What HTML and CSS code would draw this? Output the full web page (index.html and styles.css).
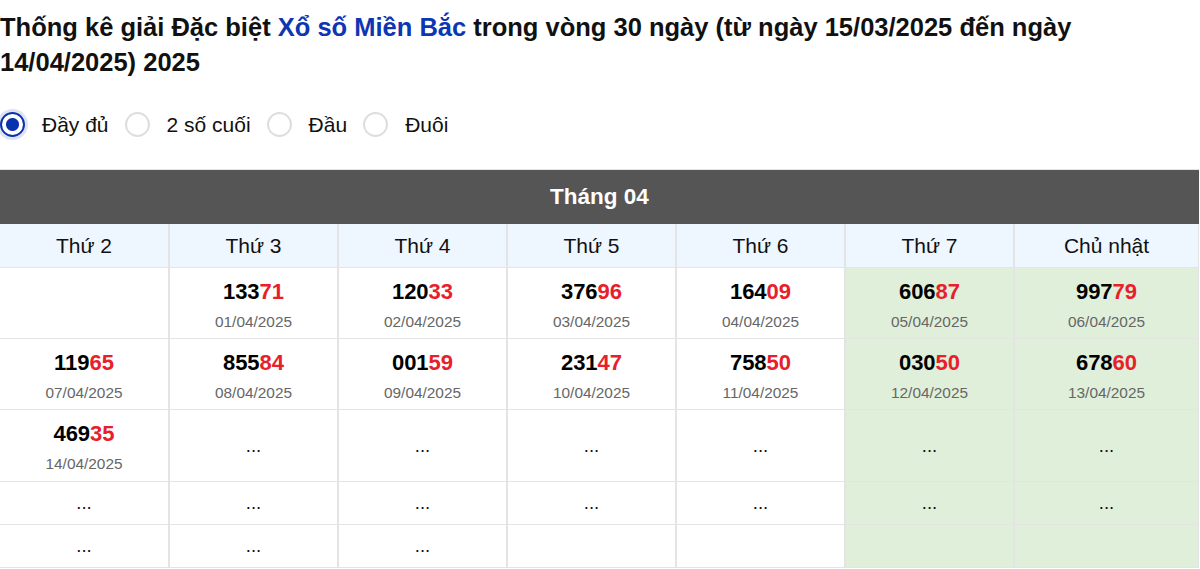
FILE: index.html
```html
<!DOCTYPE html>
<html lang="vi">
<head>
<meta charset="utf-8">
<title>Thống kê giải Đặc biệt</title>
<link rel="stylesheet" href="styles.css">
</head>
<body>
<h1 class="title">Thống kê giải Đặc biệt <span class="hl">Xổ số Miền Bắc</span> trong vòng 30 ngày (từ ngày 15/03/2025 đến ngày 14/04/2025) 2025</h1>
<div class="options">
  <label class="opt"><span class="radio on"></span><span class="lbl">Đầy đủ</span></label>
  <label class="opt"><span class="radio"></span><span class="lbl">2 số cuối</span></label>
  <label class="opt"><span class="radio"></span><span class="lbl">Đầu</span></label>
  <label class="opt"><span class="radio"></span><span class="lbl">Đuôi</span></label>
</div>
<table class="cal">
  <colgroup>
    <col class="c1"><col class="c"><col class="c"><col class="c"><col class="c"><col class="c"><col>
  </colgroup>
  <thead>
    <tr><th class="month" colspan="7">Tháng 04</th></tr>
    <tr class="days"><th>Thứ 2</th><th>Thứ 3</th><th>Thứ 4</th><th>Thứ 5</th><th>Thứ 6</th><th>Thứ 7</th><th>Chủ nhật</th></tr>
  </thead>
  <tbody>
    <tr class="data">
      <td></td>
      <td><div class="num">133<span class="r">71</span></div><div class="date">01/04/2025</div></td>
      <td><div class="num">120<span class="r">33</span></div><div class="date">02/04/2025</div></td>
      <td><div class="num">376<span class="r">96</span></div><div class="date">03/04/2025</div></td>
      <td><div class="num">164<span class="r">09</span></div><div class="date">04/04/2025</div></td>
      <td class="we"><div class="num">606<span class="r">87</span></div><div class="date">05/04/2025</div></td>
      <td class="we"><div class="num">997<span class="r">79</span></div><div class="date">06/04/2025</div></td>
    </tr>
    <tr class="data">
      <td><div class="num">119<span class="r">65</span></div><div class="date">07/04/2025</div></td>
      <td><div class="num">855<span class="r">84</span></div><div class="date">08/04/2025</div></td>
      <td><div class="num">001<span class="r">59</span></div><div class="date">09/04/2025</div></td>
      <td><div class="num">231<span class="r">47</span></div><div class="date">10/04/2025</div></td>
      <td><div class="num">758<span class="r">50</span></div><div class="date">11/04/2025</div></td>
      <td class="we"><div class="num">030<span class="r">50</span></div><div class="date">12/04/2025</div></td>
      <td class="we"><div class="num">678<span class="r">60</span></div><div class="date">13/04/2025</div></td>
    </tr>
    <tr class="data tall">
      <td><div class="num">469<span class="r">35</span></div><div class="date">14/04/2025</div></td>
      <td class="dots">...</td>
      <td class="dots">...</td>
      <td class="dots">...</td>
      <td class="dots">...</td>
      <td class="dots we">...</td>
      <td class="dots we">...</td>
    </tr>
    <tr class="empty">
      <td class="dots">...</td>
      <td class="dots">...</td>
      <td class="dots">...</td>
      <td class="dots">...</td>
      <td class="dots">...</td>
      <td class="dots we">...</td>
      <td class="dots we">...</td>
    </tr>
    <tr class="empty">
      <td class="dots">...</td>
      <td class="dots">...</td>
      <td class="dots">...</td>
      <td class="dots"></td>
      <td class="dots"></td>
      <td class="dots we"></td>
      <td class="dots we"></td>
    </tr>
  </tbody>
</table>
</body>
</html>
```
FILE: styles.css
```css
html, body {
  margin: 0;
  padding: 0;
  background: #fff;
}
body {
  font-family: "Liberation Sans", Arial, sans-serif;
  color: #111;
}
.title {
  margin: 0;
  padding-top: 10px;
  font-size: 25.5px;
  line-height: 35px;
  font-weight: bold;
  color: #111;
}
.hl {
  color: #0d36b3;
}
.options {
  display: flex;
  align-items: center;
  margin-top: 32px;
  height: 25px;
}
.opt {
  display: flex;
  align-items: center;
  margin-right: 16px;
}
.radio {
  box-sizing: border-box;
  width: 25px;
  height: 25px;
  border-radius: 50%;
  border: 2px solid #dedede;
  background: #fff;
}
.radio.on {
  border: 2.5px solid #0a32ac;
  background: radial-gradient(circle, #0a32ac 0, #0a32ac 6px, #fff 7px);
  box-shadow: 0 0 0 3px rgba(13, 54, 179, 0.14);
}
.lbl {
  margin-left: 17px;
  font-size: 21px;
  line-height: 25px;
  color: #111;
}
.cal {
  margin-top: 32px;
  width: 1199px;
  table-layout: fixed;
  border-collapse: separate;
  border-spacing: 0;
  border-top: 1px solid #e4e4e4;
}
.cal col.c1 {
  width: 170px;
}
.cal col.c {
  width: 169px;
}
.cal th, .cal td {
  text-align: center;
  padding: 0;
  box-sizing: border-box;
}
.month {
  background: #555555;
  color: #fff;
  font-size: 22.5px;
  font-weight: bold;
  height: 54px;
}
.days th {
  background: #eef6ff;
  font-weight: normal;
  font-size: 21px;
  height: 44px;
  color: #111;
}
.days th, .cal td {
  border-right: 2px solid #e4e4e4;
  border-bottom: 1px solid #e4e4e4;
}
.days th:last-child, .cal td:last-child {
  border-right-width: 1px;
}
.data td {
  height: 71px;
  vertical-align: top;
  padding: 10px 0 6px;
}
.data.tall td {
  height: 72px;
}
.num {
  font-size: 22px;
  line-height: 28px;
  font-weight: bold;
  color: #000;
}
.r {
  color: #e8202a;
}
.date {
  margin-top: 6px;
  font-size: 15.4px;
  line-height: 20px;
  color: #666;
}
.cal td.dots {
  vertical-align: middle;
  padding: 0;
  font-size: 18.5px;
  color: #111;
}
.empty td {
  height: 43px;
}
.cal td.we {
  background: #e0efda;
}
```
